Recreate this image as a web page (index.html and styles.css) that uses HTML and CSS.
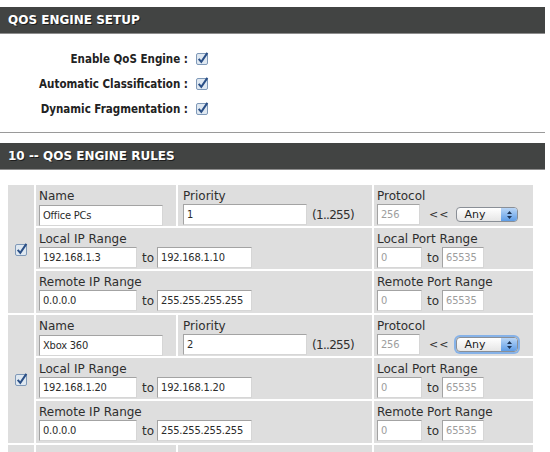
FILE: index.html
```html
<!DOCTYPE html>
<html lang="en">
<head>
    <meta charset="UTF-8">
    <title>QoS Engine</title>
    <link rel="stylesheet" href="styles.css">
</head>
<body>
    <div class="section-head">QOS ENGINE SETUP</div>
    <div class="setup">
        <div class="setup-row">
            <span class="setup-label">Enable QoS Engine :</span>
            <svg class="check" width="13" height="13" viewBox="0 0 13 13"><rect x="0.5" y="1.5" width="11" height="11" rx="1.5" fill="#dfe8f1" stroke="#7f99b8"/><path d="M2.7 6.8 L5.3 9.8 L11.4 0.9" fill="none" stroke="#2a4f86" stroke-width="2"/></svg>
        </div>
        <div class="setup-row">
            <span class="setup-label">Automatic Classification :</span>
            <svg class="check" width="13" height="13" viewBox="0 0 13 13"><rect x="0.5" y="1.5" width="11" height="11" rx="1.5" fill="#dfe8f1" stroke="#7f99b8"/><path d="M2.7 6.8 L5.3 9.8 L11.4 0.9" fill="none" stroke="#2a4f86" stroke-width="2"/></svg>
        </div>
        <div class="setup-row">
            <span class="setup-label">Dynamic Fragmentation :</span>
            <svg class="check" width="13" height="13" viewBox="0 0 13 13"><rect x="0.5" y="1.5" width="11" height="11" rx="1.5" fill="#dfe8f1" stroke="#7f99b8"/><path d="M2.7 6.8 L5.3 9.8 L11.4 0.9" fill="none" stroke="#2a4f86" stroke-width="2"/></svg>
        </div>
    </div>

    <div class="divider"></div>

    <div class="section-head">10 -- QOS ENGINE RULES</div>

    <div class="rules">
        <!-- rule 1 -->
        <div class="rule">
            <div class="rule-check">
                <svg width="13" height="13" viewBox="0 0 13 13"><rect x="0.5" y="1.5" width="11" height="11" rx="1.5" fill="#dfe8f1" stroke="#7f99b8"/><path d="M2.7 6.8 L5.3 9.8 L11.4 0.9" fill="none" stroke="#2a4f86" stroke-width="2"/></svg>
            </div>
            <div class="cell">
                <div class="label">Name</div>
                <input class="field w-name" type="text" value="Office PCs">
            </div>
            <div class="cell prio">
                <div class="label">Priority</div>
                <div class="line">
                    <input class="field w-name" type="text" value="1">
                    <span class="range">(1..255)</span>
                </div>
            </div>
            <div class="cell">
                <div class="label">Protocol</div>
                <div class="line">
                    <input class="field w-proto dim" type="text" value="256">
                    <span class="arrows">&lt;&lt;</span>
                    <div class="select"><span class="select-text">Any</span><span class="select-cap"><svg width="7" height="10" viewBox="0 0 7 10"><path d="M3.5 1 L6 4 L1 4 Z M3.5 9 L6 6 L1 6 Z" fill="#1d3558"/></svg></span></div>
                </div>
            </div>
            <div class="cell span2">
                <div class="label">Local IP Range</div>
                <div class="line">
                    <input class="field w-ip" type="text" value="192.168.1.3">
                    <span class="to">to</span>
                    <input class="field w-ip2" type="text" value="192.168.1.10">
                </div>
            </div>
            <div class="cell">
                <div class="label">Local Port Range</div>
                <div class="line">
                    <input class="field w-port dim" type="text" value="0">
                    <span class="to">to</span>
                    <input class="field w-port2 dim" type="text" value="65535">
                </div>
            </div>
            <div class="cell span2">
                <div class="label">Remote IP Range</div>
                <div class="line">
                    <input class="field w-ip" type="text" value="0.0.0.0">
                    <span class="to">to</span>
                    <input class="field w-ip2" type="text" value="255.255.255.255">
                </div>
            </div>
            <div class="cell">
                <div class="label">Remote Port Range</div>
                <div class="line">
                    <input class="field w-port dim" type="text" value="0">
                    <span class="to">to</span>
                    <input class="field w-port2 dim" type="text" value="65535">
                </div>
            </div>
        </div>

        <!-- rule 2 -->
        <div class="rule">
            <div class="rule-check">
                <svg width="13" height="13" viewBox="0 0 13 13"><rect x="0.5" y="1.5" width="11" height="11" rx="1.5" fill="#dfe8f1" stroke="#7f99b8"/><path d="M2.7 6.8 L5.3 9.8 L11.4 0.9" fill="none" stroke="#2a4f86" stroke-width="2"/></svg>
            </div>
            <div class="cell">
                <div class="label">Name</div>
                <input class="field w-name" type="text" value="Xbox 360">
            </div>
            <div class="cell prio">
                <div class="label">Priority</div>
                <div class="line">
                    <input class="field w-name" type="text" value="2">
                    <span class="range">(1..255)</span>
                </div>
            </div>
            <div class="cell">
                <div class="label">Protocol</div>
                <div class="line">
                    <input class="field w-proto dim" type="text" value="256">
                    <span class="arrows">&lt;&lt;</span>
                    <div class="select focused"><span class="select-text">Any</span><span class="select-cap"><svg width="7" height="10" viewBox="0 0 7 10"><path d="M3.5 1 L6 4 L1 4 Z M3.5 9 L6 6 L1 6 Z" fill="#1d3558"/></svg></span></div>
                </div>
            </div>
            <div class="cell span2">
                <div class="label">Local IP Range</div>
                <div class="line">
                    <input class="field w-ip" type="text" value="192.168.1.20">
                    <span class="to">to</span>
                    <input class="field w-ip2" type="text" value="192.168.1.20">
                </div>
            </div>
            <div class="cell">
                <div class="label">Local Port Range</div>
                <div class="line">
                    <input class="field w-port dim" type="text" value="0">
                    <span class="to">to</span>
                    <input class="field w-port2 dim" type="text" value="65535">
                </div>
            </div>
            <div class="cell span2">
                <div class="label">Remote IP Range</div>
                <div class="line">
                    <input class="field w-ip" type="text" value="0.0.0.0">
                    <span class="to">to</span>
                    <input class="field w-ip2" type="text" value="255.255.255.255">
                </div>
            </div>
            <div class="cell">
                <div class="label">Remote Port Range</div>
                <div class="line">
                    <input class="field w-port dim" type="text" value="0">
                    <span class="to">to</span>
                    <input class="field w-port2 dim" type="text" value="65535">
                </div>
            </div>
        </div>

        <!-- rule 3, only its top edge shows -->
        <div class="rule">
            <div class="rule-check"></div>
            <div class="cell"></div>
            <div class="cell"></div>
            <div class="cell"></div>
        </div>
    </div>
</body>
</html>
```

FILE: styles.css
```css
body {
    font-family: 'DejaVu Sans', sans-serif;
    background-color: #fff;
    color: #2b2b2b;
    margin: 0;
    overflow: hidden;
}

.section-head {
    width: 537px;
    height: 26px;
    margin-top: 7px;
    padding-left: 8px;
    background-color: #424443;
    border-bottom: 1px solid #8d8d8d;
    color: #fff;
    font-size: 12px;
    font-weight: bold;
    line-height: 27px;
    text-shadow: 1px 1px 0 #1e1e1e;
}

.setup {
    padding-top: 12px;
}

.setup-row {
    display: flex;
    align-items: center;
    gap: 8px;
    height: 25px;
    padding-left: 8px;
}

.setup-label {
    width: 180px;
    text-align: right;
    font-size: 11.5px;
    font-weight: bold;
    font-stretch: condensed;
    color: #222;
}

.divider {
    width: 545px;
    height: 1px;
    margin-top: 11px;
    margin-bottom: 10px;
    background-color: #9a9a9a;
}

.rules {
    margin-top: 15px;
    margin-left: 8px;
    width: 525px;
}

.rule {
    display: grid;
    grid-template-columns: 26px 140px 194px 159px;
    grid-template-rows: 41px 41px 42px;
    gap: 2px;
    margin-bottom: 2px;
}

.rule-check {
    grid-row: 1 / 4;
    display: flex;
    align-items: center;
    justify-content: center;
    background-color: #dedede;
}

.cell {
    background-color: #dedede;
    padding: 4px 3px 0;
}

.cell.prio {
    padding-left: 5px;
}

.span2 {
    grid-column: 2 / 4;
}

.label {
    font-size: 12px;
    line-height: 14px;
    color: #2e2e2e;
    margin-bottom: 1px;
}

.line {
    display: flex;
    align-items: center;
}

.field {
    box-sizing: border-box;
    height: 21px;
    margin: 0;
    padding: 0 3px;
    border: 1px solid;
    border-color: #a3a3a3 #d6d6d6 #d6d6d6 #a3a3a3;
    background-color: #fff;
    font-family: 'DejaVu Sans', sans-serif;
    font-stretch: condensed;
    font-size: 11px;
    letter-spacing: -0.2px;
    color: #2b2b2b;
    outline: none;
}

.field.dim {
    color: #9d9d9d;
}

.w-name { width: 124px; }
.w-proto { width: 43px; }
.w-ip { width: 98px; }
.w-ip2 { width: 95px; }
.w-port { width: 45px; }
.w-port2 { width: 42px; }

.to {
    font-size: 12px;
    margin: 0 3px 0 5px;
    color: #2e2e2e;
}

.range {
    font-size: 12px;
    letter-spacing: -0.7px;
    margin-left: 5px;
    color: #2e2e2e;
}

.arrows {
    font-size: 11px;
    letter-spacing: 1px;
    margin: 0 7px 0 9px;
    color: #2e2e2e;
}

.select {
    display: flex;
    align-items: center;
    box-sizing: border-box;
    width: 62px;
    height: 15px;
    border: 1px solid #8a8f96;
    border-radius: 4px;
    background: linear-gradient(#ffffff, #e6e6e6);
    overflow: hidden;
}

.select.focused {
    box-shadow: 0 0 0 2px #86b2e8;
}

.select-text {
    flex-grow: 1;
    font-size: 11px;
    padding-left: 7px;
    color: #222;
}

.select-cap {
    display: flex;
    align-items: center;
    justify-content: center;
    width: 16px;
    height: 100%;
    background: linear-gradient(#b9d6f7, #5f9de6);
}
```
